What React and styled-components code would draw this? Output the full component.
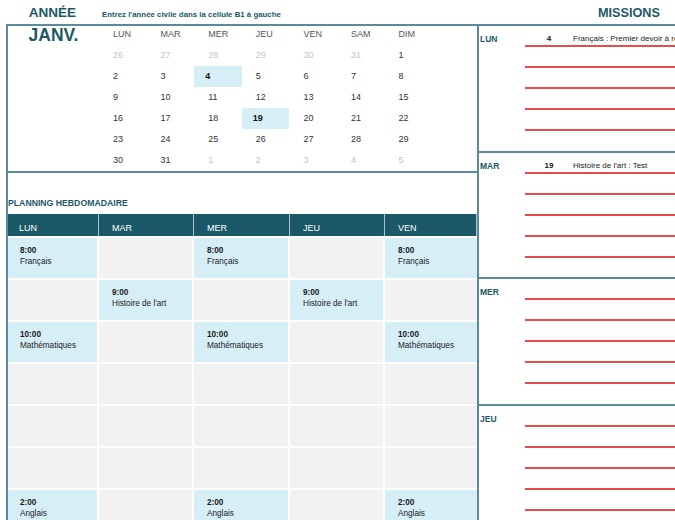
import React from 'react';
import styled, { createGlobalStyle } from 'styled-components';

const TEAL = '#1b5868';
const LINE = '#5a8b98';
const BLUE = '#d6eef6';
const GRAY = '#f2f2f2';
const RED = '#e94a4a';

const Global = createGlobalStyle`
  html, body { margin: 0; padding: 0; background: #fff; }
  body { font-family: "Liberation Sans", Arial, sans-serif; color: #222; }
  * { box-sizing: border-box; }
`;

const Page = styled.div`
  width: 675px;
  height: 520px;
  overflow: hidden;
`;

const Header = styled.header`
  display: grid;
  grid-template-columns: 93px auto 1fr;
  align-items: center;
  height: 24px;
  padding-left: 6px;
`;

const YearLabel = styled.div`
  text-align: center;
  font-weight: bold;
  font-size: 13.5px;
  color: ${TEAL};
  padding-top: 1px;
`;

const Hint = styled.div`
  padding-left: 3px;
  font-weight: bold;
  font-size: 7.85px;
  color: ${TEAL};
  padding-top: 4px;
`;

const Missions = styled.div`
  justify-self: end;
  padding-right: 15px;
  font-weight: bold;
  font-size: 12.7px;
  color: ${TEAL};
  padding-top: 2px;
`;

const Main = styled.div`
  margin-left: 6px;
  display: grid;
  grid-template-columns: 471px 1fr;
  border-top: 2px solid ${LINE};
`;

const Left = styled.section`
  border-left: 2px solid ${LINE};
  display: flex;
  flex-direction: column;
`;

const Calendar = styled.div`
  display: grid;
  grid-template-columns: 91px repeat(7, 47.6px) 1fr;
  grid-template-rows: 19px repeat(6, 21px);
  border-bottom: 2px solid ${LINE};
`;

const Month = styled.div`
  grid-column: 1;
  grid-row: 1 / span 3;
  text-align: center;
  font-weight: bold;
  font-size: 17.5px;
  line-height: 1;
  color: ${TEAL};
  padding-top: 1px;
`;

const DayHead = styled.div`
  display: flex;
  align-items: center;
  padding: 0 0 3px 14px;
  font-size: 9px;
  color: #555;
`;

const Day = styled.div`
  display: flex;
  align-items: center;
  padding: 0 0 1px 14px;
  font-size: 9px;
  color: ${(p) => (p.$muted ? '#c4c4c4' : '#333')};
  font-weight: ${(p) => (p.$hl ? 'bold' : 'normal')};
  background: ${(p) => (p.$hl ? BLUE : 'transparent')};
  ${(p) => p.$hl && 'color: #111; padding-left: 11px;'}
`;

const Spacer = styled.div``;

const PlanTitle = styled.div`
  height: 41px;
  display: flex;
  align-items: flex-end;
  padding-bottom: 6px;
  font-weight: bold;
  font-size: 8.7px;
  color: ${TEAL};
`;

const Plan = styled.div`
  display: grid;
  grid-template-columns: 91px 95px 96px 95px 1fr;
  grid-template-rows: 22px;
  grid-auto-rows: 42px;
`;

const PlanHead = styled.div`
  background: ${TEAL};
  color: #fff;
  font-size: 9px;
  display: flex;
  align-items: flex-end;
  padding: 0 0 3px 13px;
  border-right: 1px solid #a8c3ca;
  &:first-child { padding-left: 11px; }
  &:last-child { border-right: none; }
`;

const Slot = styled.div`
  background: ${(p) => (p.$on ? BLUE : GRAY)};
  border-right: ${(p) => (p.$last ? '0' : '2px solid #fff')};
  border-top: 2px solid #fff;
  padding: 7px 0 0 ${(p) => (p.$first ? '12px' : '13px')};
  font-size: 8.2px;
  line-height: 11px;
  color: #1a1a1a;
`;

const Time = styled.div`
  font-weight: bold;
`;

const Right = styled.section`
  border-left: 2px solid ${LINE};
  display: flex;
  flex-direction: column;
`;

const DayBlock = styled.div`
  height: 126.5px;
  border-bottom: 2px solid ${LINE};
  display: grid;
  grid-template-columns: 46px 1fr;
  align-content: start;
`;

const DayName = styled.div`
  padding: 8px 0 0 1px;
  font-weight: bold;
  font-size: 8.5px;
  line-height: 10px;
  color: ${TEAL};
`;

const Lines = styled.div`
  display: flex;
  flex-direction: column;
`;

const Line = styled.div`
  height: 21px;
  border-bottom: 2px solid ${RED};
  display: grid;
  grid-template-columns: 48px 1fr;
  align-items: end;
  padding-bottom: 2px;
  font-size: 8px;
  white-space: nowrap;
  color: #222;
`;

const LineDate = styled.span`
  text-align: center;
  font-weight: bold;
  color: #111;
`;

const LineText = styled.span``;

const heads = ['LUN', 'MAR', 'MER', 'JEU', 'VEN', 'SAM', 'DIM'];

const weeks = [
  [[26, 1], [27, 1], [28, 1], [29, 1], [30, 1], [31, 1], [1, 0]],
  [[2], [3], [4, 0, 1], [5], [6], [7], [8]],
  [[9], [10], [11], [12], [13], [14], [15]],
  [[16], [17], [18], [19, 0, 1], [20], [21], [22]],
  [[23], [24], [25], [26], [27], [28], [29]],
  [[30], [31], [1, 1], [2, 1], [3, 1], [4, 1], [5, 1]],
];

const planHeads = ['LUN', 'MAR', 'MER', 'JEU', 'VEN'];

const F = ['8:00', 'Français'];
const H = ['9:00', "Histoire de l'art"];
const M = ['10:00', 'Mathématiques'];
const A = ['2:00', 'Anglais'];

const planRows = [
  [F, null, F, null, F],
  [null, H, null, H, null],
  [M, null, M, null, M],
  [null, null, null, null, null],
  [null, null, null, null, null],
  [null, null, null, null, null],
  [A, null, A, null, A],
];

const missions = [
  { day: 'LUN', items: [['4', 'Français : Premier devoir à rendre']] },
  { day: 'MAR', items: [['19', "Histoire de l'art : Test"]] },
  { day: 'MER', items: [] },
  { day: 'JEU', items: [] },
];

export default function App() {
  return (
    <Page>
      <Global />
      <Header>
        <YearLabel>ANNÉE</YearLabel>
        <Hint>Entrez l'année civile dans la cellule B1 à gauche</Hint>
        <Missions>MISSIONS</Missions>
      </Header>
      <Main>
        <Left>
          <Calendar>
            <Month>JANV.</Month>
            {heads.map((h) => (
              <DayHead key={h}>{h}</DayHead>
            ))}
            <Spacer />
            {weeks.map((w, i) => (
              <React.Fragment key={i}>
                {i > 1 && <Spacer />}
                {w.map(([n, m, hl], j) => (
                  <Day key={j} $muted={!!m} $hl={!!hl}>
                    {n}
                  </Day>
                ))}
                <Spacer />
              </React.Fragment>
            ))}
          </Calendar>
          <PlanTitle>PLANNING HEBDOMADAIRE</PlanTitle>
          <Plan>
            {planHeads.map((h) => (
              <PlanHead key={h}>{h}</PlanHead>
            ))}
            {planRows.map((r, i) =>
              r.map((c, j) => (
                <Slot key={`${i}-${j}`} $on={!!c} $first={j === 0} $last={j === 4}>
                  {c && (
                    <>
                      <Time>{c[0]}</Time>
                      <div>{c[1]}</div>
                    </>
                  )}
                </Slot>
              ))
            )}
          </Plan>
        </Left>
        <Right>
          {missions.map((m) => (
            <DayBlock key={m.day}>
              <DayName>{m.day}</DayName>
              <Lines>
                {[0, 1, 2, 3, 4].map((k) => (
                  <Line key={k}>
                    <LineDate>{m.items[k] ? m.items[k][0] : ''}</LineDate>
                    <LineText>{m.items[k] ? m.items[k][1] : ''}</LineText>
                  </Line>
                ))}
              </Lines>
            </DayBlock>
          ))}
        </Right>
      </Main>
    </Page>
  );
}
